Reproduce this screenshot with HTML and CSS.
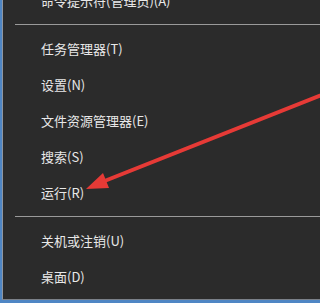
FILE: index.html
```html
<!DOCTYPE html>
<html lang="zh-CN">
<head>
<meta charset="utf-8">
<title>Win+X 菜单</title>
<link rel="stylesheet" href="styles.css">
</head>
<body>
<div class="screen">
  <div class="frame">
    <ul class="menu">
      <li class="item">命令提示符(管理员)(A)</li>
      <li class="sep"></li>
      <li class="item">任务管理器(T)</li>
      <li class="item">设置(N)</li>
      <li class="item">文件资源管理器(E)</li>
      <li class="item">搜索(S)</li>
      <li class="item">运行(R)</li>
      <li class="sep"></li>
      <li class="item">关机或注销(U)</li>
      <li class="item">桌面(D)</li>
    </ul>
  </div>
  <svg class="arrow" width="420" height="303" viewBox="0 0 420 303">
    <line x1="420" y1="56" x2="102" y2="182" stroke="#e63a36" stroke-width="4" stroke-linecap="round"/>
    <polygon points="86,189 103,173 109,188" fill="#e63a36"/>
  </svg>
</div>
</body>
</html>
```

FILE: styles.css
```css
html, body {
  margin: 0;
  padding: 0;
  background: #2b2b2b;
}
.screen {
  position: relative;
  width: 100%;
  height: 303px;
  overflow: hidden;
  background: #4f86c4;
  display: flex;
  flex-direction: column;
}
.frame {
  margin-left: 2px;
  height: 300px;
  border-left: 1px solid #8f96a0;
  border-bottom: 1px solid #7b8088;
  background: #2b2b2b;
  overflow: hidden;
  box-sizing: border-box;
}
.menu {
  list-style: none;
  margin: -17px 0 0 0;
  padding: 0;
  font-family: "Noto Sans CJK SC", "Liberation Sans", sans-serif;
  font-size: 13px;
  color: #e8e8e8;
}
.item {
  height: 36px;
  line-height: 36px;
  padding-left: 38px;
  white-space: nowrap;
}
.sep {
  height: 12px;
  display: flex;
  flex-direction: column;
  padding-top: 5px;
  padding-left: 12px;
  box-sizing: border-box;
}
.sep::before {
  content: "";
  display: block;
  height: 1px;
  background: #9a9a9a;
}
.arrow {
  position: absolute;
  left: 0;
  top: 0;
}
```
